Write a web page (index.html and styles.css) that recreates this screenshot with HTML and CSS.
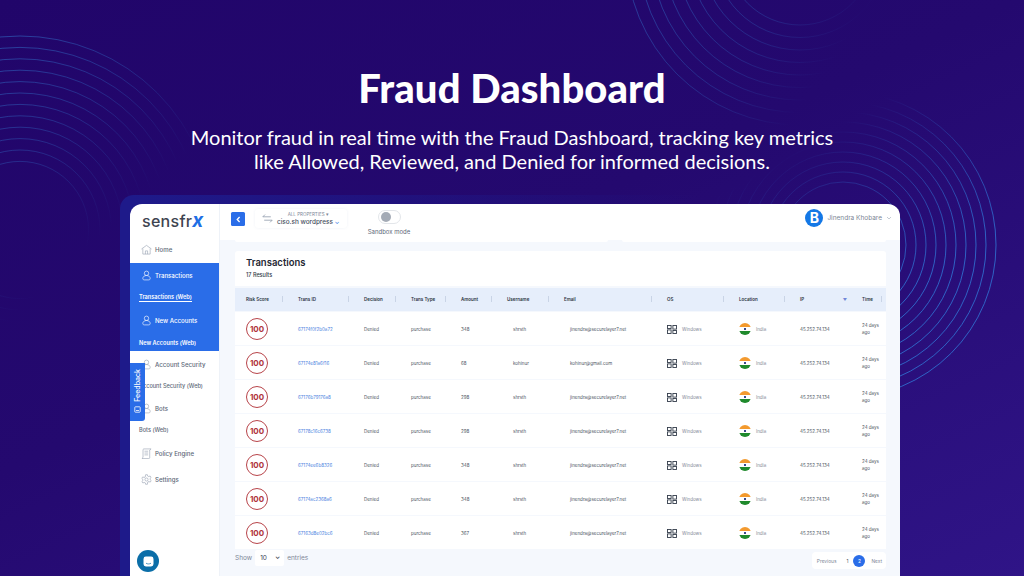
FILE: index.html
```html
<!DOCTYPE html>
<html>
<head>
    <title>Fraud Dashboard</title>
    <link rel="stylesheet" href="styles.css">
</head>
<body>
    <div class="stage">
        <svg class="rings" width="1024" height="576" viewBox="0 0 1024 576" fill="none" stroke-width="0.9">
            <defs>
                <linearGradient id="fadeLeft" gradientUnits="userSpaceOnUse" x1="10" y1="40" x2="150" y2="190">
                    <stop offset="0" stop-color="#2f63bd" stop-opacity="0.7"/>
                    <stop offset="0.5" stop-color="#2f63bd" stop-opacity="0.4"/>
                    <stop offset="1" stop-color="#2f63bd" stop-opacity="0"/>
                </linearGradient>
                <linearGradient id="fadeTop" gradientUnits="userSpaceOnUse" x1="640" y1="0" x2="800" y2="110">
                    <stop offset="0" stop-color="#2f63bd" stop-opacity="0.6"/>
                    <stop offset="0.6" stop-color="#2f63bd" stop-opacity="0.35"/>
                    <stop offset="1" stop-color="#2f63bd" stop-opacity="0"/>
                </linearGradient>
                <linearGradient id="fadeRight" gradientUnits="userSpaceOnUse" x1="860" y1="110" x2="950" y2="260">
                    <stop offset="0" stop-color="#2f6fd0" stop-opacity="0"/>
                    <stop offset="0.6" stop-color="#2f6fd0" stop-opacity="0.6"/>
                    <stop offset="1" stop-color="#2f6fd0" stop-opacity="0.95"/>
                </linearGradient>
            </defs>
            <g stroke="url(#fadeLeft)">
                <circle cx="20" cy="230" r="194"/><circle cx="20" cy="230" r="182.6"/><circle cx="20" cy="230" r="171.2"/>
                <circle cx="20" cy="230" r="159.8"/><circle cx="20" cy="230" r="148.4"/><circle cx="20" cy="230" r="137"/>
                <circle cx="20" cy="230" r="125.6"/><circle cx="20" cy="230" r="114.2"/><circle cx="20" cy="230" r="102.8"/>
                <circle cx="20" cy="230" r="91.4"/><circle cx="20" cy="230" r="80"/><circle cx="20" cy="230" r="68.6"/>
            </g>
            <g stroke="url(#fadeTop)">
                <circle cx="800" cy="-49" r="174"/><circle cx="800" cy="-49" r="161.5"/><circle cx="800" cy="-49" r="149"/>
                <circle cx="800" cy="-49" r="136.5"/><circle cx="800" cy="-49" r="124"/><circle cx="800" cy="-49" r="111.5"/>
                <circle cx="800" cy="-49" r="99"/><circle cx="800" cy="-49" r="86.5"/><circle cx="800" cy="-49" r="74"/>
            </g>
            <g stroke="url(#fadeRight)">
                <circle cx="843" cy="245" r="153"/><circle cx="843" cy="245" r="143"/><circle cx="843" cy="245" r="133"/>
                <circle cx="843" cy="245" r="123"/><circle cx="843" cy="245" r="113"/><circle cx="843" cy="245" r="103"/>
                <circle cx="843" cy="245" r="93"/><circle cx="843" cy="245" r="83"/><circle cx="843" cy="245" r="73"/>
                <circle cx="843" cy="245" r="63"/>
            </g>
        </svg>

        <div class="hero">
            <h1>Fraud Dashboard</h1>
            <p>Monitor fraud in real time with the Fraud Dashboard, tracking key metrics<br>like Allowed, Reviewed, and Denied for informed decisions.</p>
        </div>

        <div class="halo">
            <div class="panel">
                <div class="sidebar">
                    <div class="logo">sensfr<span>x</span></div>
                    <div class="nav-item home">
                        <svg class="nav-icon" viewBox="0 0 12 12" fill="none" stroke="#8b97a8" stroke-width="0.6"><path d="M0.5 5.5 6 1.5l5.5 4M2 5v6h8V5M4.8 11V7.5h2.4V11"/></svg>
                        Home
                    </div>
                    <div class="nav-active">
                        <div class="nav-item">
                            <svg class="nav-icon" viewBox="0 0 12 12" fill="none" stroke="#fff" stroke-width="0.7"><circle cx="6" cy="3.6" r="2.4"/><path d="M6 6c-2.6 0-4 1.6-4 3.2 0 1.2.8 1.6 1.6 1.6h4.8c.8 0 1.6-.4 1.6-1.6C10 7.6 8.6 6 6 6z"/></svg>
                            Transactions
                        </div>
                        <div class="nav-sub"><span class="current">Transactions (Web)</span></div>
                        <div class="nav-item">
                            <svg class="nav-icon" viewBox="0 0 12 12" fill="none" stroke="#fff" stroke-width="0.7"><circle cx="6" cy="3.6" r="2.4"/><path d="M6 6c-2.6 0-4 1.6-4 3.2 0 1.2.8 1.6 1.6 1.6h4.8c.8 0 1.6-.4 1.6-1.6C10 7.6 8.6 6 6 6z"/></svg>
                            New Accounts
                        </div>
                        <div class="nav-sub">New Accounts (Web)</div>
                    </div>
                    <div class="nav-item">
                        <svg class="nav-icon" viewBox="0 0 12 12" fill="none" stroke="#8b97a8" stroke-width="0.6"><circle cx="6" cy="3.6" r="2.4"/><path d="M6 6c-2.6 0-4 1.6-4 3.2 0 1.2.8 1.6 1.6 1.6h4.8c.8 0 1.6-.4 1.6-1.6C10 7.6 8.6 6 6 6z"/></svg>
                        Account Security
                    </div>
                    <div class="nav-sub dark">Account Security (Web)</div>
                    <div class="nav-item">
                        <svg class="nav-icon" viewBox="0 0 12 12" fill="none" stroke="#8b97a8" stroke-width="0.6"><circle cx="6" cy="3.6" r="2.4"/><path d="M6 6c-2.6 0-4 1.6-4 3.2 0 1.2.8 1.6 1.6 1.6h4.8c.8 0 1.6-.4 1.6-1.6C10 7.6 8.6 6 6 6z"/></svg>
                        Bots
                    </div>
                    <div class="nav-sub dark last">Bots (Web)</div>
                    <div class="nav-item tall">
                        <svg class="nav-icon" viewBox="0 0 12 12" fill="none" stroke="#8b97a8" stroke-width="0.6"><path d="M3 1h8L9.5 2.2V10.5a1 1 0 0 1-1 1H1l1.2-1.2V1.6zM3.8 3.5h4M3.8 5.5h4M3.8 7.5h4"/></svg>
                        Policy Engine
                    </div>
                    <div class="nav-item tall">
                        <svg class="nav-icon" viewBox="0 0 12 12" fill="none" stroke="#8b97a8" stroke-width="0.6"><circle cx="6" cy="6" r="1.7"/><path d="M5 .8h2l.3 1.5 1.3.6 1.3-.8 1.1 1.7-1.1 1 .1 1.4 1.1 1-1.1 1.7-1.3-.8-1.3.6L7 11.2H5l-.3-1.5-1.3-.6-1.3.8L1 8.2l1.1-1L2 5.8l-1.1-1L2 3.1l1.3.8 1.3-.6z"/></svg>
                        Settings
                    </div>
                </div>

                <div class="content">
                    <div class="topbar">
                        <div class="back-btn">
                            <svg width="7" height="7" viewBox="0 0 7 7" fill="none" stroke="#fff" stroke-width="1.3"><path d="M4.6 1 2.2 3.5 4.6 6"/></svg>
                        </div>
                        <div class="property">
                            <svg class="swap" width="11" height="9" viewBox="0 0 11 9" fill="none" stroke="#7f8c9f" stroke-width="0.7"><path d="M3 .6 .8 2.8h8M8 8.4l2.2-2.2h-8"/></svg>
                            <div class="property-text">
                                <div class="property-label">ALL PROPERTIES ▾</div>
                                <div class="property-name">ciso.sh wordpress <span class="caret">⌄</span></div>
                            </div>
                        </div>
                        <div class="sandbox">
                            <div class="toggle"><span></span></div>
                            <div class="sandbox-label">Sandbox mode</div>
                        </div>
                        <div class="user">
                            <div class="avatar">B</div>
                            <span>Jinendra Khobare</span>
                            <svg width="6" height="4" viewBox="0 0 6 4" fill="none" stroke="#9aa6b6" stroke-width="0.6"><path d="M1 1 3 3 5 1"/></svg>
                        </div>
                    </div>

                    <div class="main">
                        <div class="stubs"><div class="stub wide"></div><div class="stub"></div></div>
                        <div class="title-card">
                            <h2>Transactions</h2>
                            <div class="results">17 Results</div>
                        </div>

                        <div class="row head">
                            <div class="th">Risk Score<i></i></div>
                            <div class="th">Trans ID<i></i></div>
                            <div class="th">Decision<i></i></div>
                            <div class="th">Trans Type<i></i></div>
                            <div class="th">Amount<i></i></div>
                            <div class="th">Username<i></i></div>
                            <div class="th">Email<i></i></div>
                            <div class="th">OS<i></i></div>
                            <div class="th">Location<i></i></div>
                            <div class="th">IP<b class="sort">▼</b></div>
                            <div class="th">Time<i></i></div>
                        </div>

                        <div class="row">
                            <div class="td"><span class="score">100</span></div>
                            <div class="td link">67174f0f2b0a72</div>
                            <div class="td">Denied</div>
                            <div class="td">purchase</div>
                            <div class="td">348</div>
                            <div class="td indent">shrsth</div>
                            <div class="td indent">jinendra@securelayer7.net</div>
                            <div class="td os"><svg class="win" viewBox="0 0 10 9" fill="none" stroke="#333c4a" stroke-width="0.9"><rect x="0.5" y="0.5" width="3.6" height="3"/><rect x="5.9" y="0.5" width="3.6" height="3.6"/><rect x="0.5" y="4.9" width="3.6" height="3.6"/><rect x="5.9" y="5.5" width="3.6" height="3"/></svg>Windows</div>
                            <div class="td os"><span class="flag"></span>India</div>
                            <div class="td">45.252.74.134</div>
                            <div class="td">24 days ago</div>
                        </div>
                        <div class="row">
                            <div class="td"><span class="score">100</span></div>
                            <div class="td link">67174e81a6f16</div>
                            <div class="td">Denied</div>
                            <div class="td">purchase</div>
                            <div class="td">68</div>
                            <div class="td indent">kohinur</div>
                            <div class="td indent">kohinur@gmail.com</div>
                            <div class="td os"><svg class="win" viewBox="0 0 10 9" fill="none" stroke="#333c4a" stroke-width="0.9"><rect x="0.5" y="0.5" width="3.6" height="3"/><rect x="5.9" y="0.5" width="3.6" height="3.6"/><rect x="0.5" y="4.9" width="3.6" height="3.6"/><rect x="5.9" y="5.5" width="3.6" height="3"/></svg>Windows</div>
                            <div class="td os"><span class="flag"></span>India</div>
                            <div class="td">45.252.74.134</div>
                            <div class="td">24 days ago</div>
                        </div>
                        <div class="row">
                            <div class="td"><span class="score">100</span></div>
                            <div class="td link">67176b79176a8</div>
                            <div class="td">Denied</div>
                            <div class="td">purchase</div>
                            <div class="td">298</div>
                            <div class="td indent">shrsth</div>
                            <div class="td indent">jinendra@securelayer7.net</div>
                            <div class="td os"><svg class="win" viewBox="0 0 10 9" fill="none" stroke="#333c4a" stroke-width="0.9"><rect x="0.5" y="0.5" width="3.6" height="3"/><rect x="5.9" y="0.5" width="3.6" height="3.6"/><rect x="0.5" y="4.9" width="3.6" height="3.6"/><rect x="5.9" y="5.5" width="3.6" height="3"/></svg>Windows</div>
                            <div class="td os"><span class="flag"></span>India</div>
                            <div class="td">45.252.74.134</div>
                            <div class="td">24 days ago</div>
                        </div>
                        <div class="row">
                            <div class="td"><span class="score">100</span></div>
                            <div class="td link">67178c16c6738</div>
                            <div class="td">Denied</div>
                            <div class="td">purchase</div>
                            <div class="td">298</div>
                            <div class="td indent">shrsth</div>
                            <div class="td indent">jinendra@securelayer7.net</div>
                            <div class="td os"><svg class="win" viewBox="0 0 10 9" fill="none" stroke="#333c4a" stroke-width="0.9"><rect x="0.5" y="0.5" width="3.6" height="3"/><rect x="5.9" y="0.5" width="3.6" height="3.6"/><rect x="0.5" y="4.9" width="3.6" height="3.6"/><rect x="5.9" y="5.5" width="3.6" height="3"/></svg>Windows</div>
                            <div class="td os"><span class="flag"></span>India</div>
                            <div class="td">45.252.74.134</div>
                            <div class="td">24 days ago</div>
                        </div>
                        <div class="row">
                            <div class="td"><span class="score">100</span></div>
                            <div class="td link">67174ee6b8326</div>
                            <div class="td">Denied</div>
                            <div class="td">purchase</div>
                            <div class="td">348</div>
                            <div class="td indent">shrsth</div>
                            <div class="td indent">jinendra@securelayer7.net</div>
                            <div class="td os"><svg class="win" viewBox="0 0 10 9" fill="none" stroke="#333c4a" stroke-width="0.9"><rect x="0.5" y="0.5" width="3.6" height="3"/><rect x="5.9" y="0.5" width="3.6" height="3.6"/><rect x="0.5" y="4.9" width="3.6" height="3.6"/><rect x="5.9" y="5.5" width="3.6" height="3"/></svg>Windows</div>
                            <div class="td os"><span class="flag"></span>India</div>
                            <div class="td">45.252.74.134</div>
                            <div class="td">24 days ago</div>
                        </div>
                        <div class="row">
                            <div class="td"><span class="score">100</span></div>
                            <div class="td link">67174ac2368a6</div>
                            <div class="td">Denied</div>
                            <div class="td">purchase</div>
                            <div class="td">348</div>
                            <div class="td indent">shrsth</div>
                            <div class="td indent">jinendra@securelayer7.net</div>
                            <div class="td os"><svg class="win" viewBox="0 0 10 9" fill="none" stroke="#333c4a" stroke-width="0.9"><rect x="0.5" y="0.5" width="3.6" height="3"/><rect x="5.9" y="0.5" width="3.6" height="3.6"/><rect x="0.5" y="4.9" width="3.6" height="3.6"/><rect x="5.9" y="5.5" width="3.6" height="3"/></svg>Windows</div>
                            <div class="td os"><span class="flag"></span>India</div>
                            <div class="td">45.252.74.134</div>
                            <div class="td">24 days ago</div>
                        </div>
                        <div class="row">
                            <div class="td"><span class="score">100</span></div>
                            <div class="td link">67163d8e02bc6</div>
                            <div class="td">Denied</div>
                            <div class="td">purchase</div>
                            <div class="td">367</div>
                            <div class="td indent">shrsth</div>
                            <div class="td indent">jinendra@securelayer7.net</div>
                            <div class="td os"><svg class="win" viewBox="0 0 10 9" fill="none" stroke="#333c4a" stroke-width="0.9"><rect x="0.5" y="0.5" width="3.6" height="3"/><rect x="5.9" y="0.5" width="3.6" height="3.6"/><rect x="0.5" y="4.9" width="3.6" height="3.6"/><rect x="5.9" y="5.5" width="3.6" height="3"/></svg>Windows</div>
                            <div class="td os"><span class="flag"></span>India</div>
                            <div class="td">45.252.74.134</div>
                            <div class="td">24 days ago</div>
                        </div>

                        <div class="table-foot">
                            <div class="show">
                                Show
                                <span class="select">10 <b>⌄</b></span>
                                entries
                            </div>
                            <div class="pager">
                                <span>Previous</span>
                                <span class="num">1</span>
                                <span class="page-on">2</span>
                                <span>Next</span>
                            </div>
                        </div>
                    </div>
                </div>

                <div class="feedback">
                    <span>Feedback</span>
                    <svg width="7" height="7" viewBox="0 0 7 7" fill="none" stroke="#fff" stroke-width="0.8"><rect x="0.8" y="0.8" width="5.4" height="5.4" rx="0.6"/><path d="M2 4.5h3"/></svg>
                </div>
                <div class="chat">
                    <svg width="11" height="11" viewBox="0 0 11 11"><rect x="0.5" y="0.5" width="10" height="10" rx="2.4" fill="#fff"/><path d="M3 7.2c1.5 1 3.5 1 5 0" fill="none" stroke="#0b6ea8" stroke-width="0.7"/></svg>
                </div>
            </div>
        </div>
    </div>
</body>
</html>
```

FILE: styles.css
```css
* {
    box-sizing: border-box;
}
body {
    margin: 0;
    font-family: Inter, "Liberation Sans", sans-serif;
}
.stage {
    position: relative;
    width: 1024px;
    height: 576px;
    overflow: hidden;
    background: linear-gradient(155deg, #21056a 0%, #24096f 45%, #2f1487 100%);
}
.rings {
    position: absolute;
    left: 0;
    top: 0;
}
.hero {
    position: relative;
    height: 195px;
    padding-top: 63px;
    text-align: center;
    color: #fff;
    font-family: Lato, "Liberation Sans", sans-serif;
}
.hero h1 {
    margin: 0 0 12px;
    font-size: 40px;
    line-height: 50px;
    font-weight: 900;
    letter-spacing: 0.1px;
}
.hero p {
    margin: 0;
    font-size: 20px;
    line-height: 24px;
}
.halo {
    position: relative;
    width: 780px;
    height: 381px;
    margin-left: 120px;
    padding: 9px 0 0 10px;
    border-radius: 14px 0 0 0;
    background: linear-gradient(90deg, #1e1a8a 0, #1e1a8a 10px, rgba(30, 26, 138, 0.4) 45%, rgba(30, 26, 138, 0) 75%);
}
.panel {
    position: relative;
    display: flex;
    width: 770px;
    height: 372px;
    overflow: hidden;
    border-radius: 12px 12px 0 0;
    background: #fff;
}

/* sidebar */
.sidebar {
    width: 90px;
    flex-shrink: 0;
    border-right: 1px solid #eef2f8;
    color: #5d6878;
    font-size: 6.1px;
    font-weight: 500;
}
.logo {
    height: 36px;
    padding: 5px 0 0 12px;
    font-size: 16px;
    line-height: 24px;
    font-weight: 500;
    letter-spacing: 0.3px;
    color: #3e4450;
}
.logo span {
    font-size: 19px;
    font-style: italic;
    font-weight: 700;
    color: #1f6fe5;
}
.nav-item {
    display: flex;
    align-items: center;
    gap: 3px;
    height: 22px;
    padding-left: 11px;
}
.nav-icon {
    width: 11px;
    height: 11px;
    flex-shrink: 0;
}
.home {
    height: 23px;
    padding-bottom: 4px;
}
.nav-active {
    height: 88px;
    padding-top: 1px;
    margin-bottom: 2px;
    background: #2a6de8;
    color: #fff;
}
.nav-active .nav-sub {
    height: 23px;
}
.nav-sub {
    display: flex;
    align-items: center;
    height: 22px;
    padding-left: 9px;
    font-size: 5.6px;
    font-weight: 600;
}
.nav-sub.dark {
    font-weight: 500;
    color: #5d6878;
}
.nav-sub.last {
    margin-bottom: -1px;
}
.current {
    padding-bottom: 1px;
    border-bottom: 1px solid #fff;
}
.nav-item.tall {
    height: 26px;
}

/* top bar */
.content {
    flex: 1;
    min-width: 0;
    display: flex;
    flex-direction: column;
}
.topbar {
    display: flex;
    align-items: flex-start;
    height: 36px;
    padding: 8px 8px 0 11px;
    flex-shrink: 0;
}
.back-btn {
    display: flex;
    align-items: center;
    justify-content: center;
    width: 14px;
    height: 14px;
    border-radius: 1.5px;
    background: #2a6de8;
}
.property {
    display: flex;
    align-items: center;
    gap: 4px;
    width: 92px;
    height: 19px;
    margin: -3px 0 0 10px;
    padding-left: 7px;
    border-radius: 3px;
    box-shadow: 0 0 3px rgba(60, 90, 150, 0.08);
}
.swap {
    flex-shrink: 0;
}
.property-text {
    text-align: center;
    white-space: nowrap;
}
.property-label {
    font-size: 4.5px;
    line-height: 6px;
    color: #7d8797;
}
.property-name {
    font-size: 6.4px;
    line-height: 8px;
    font-weight: 500;
    color: #46505f;
}
.caret {
    color: #2a6de8;
}
.sandbox {
    width: 44px;
    margin: -2px 0 0 20px;
    text-align: center;
}
.toggle {
    width: 23px;
    height: 14px;
    margin: 0 auto 4px;
    padding: 2px;
    border: 1px solid #e3e6ea;
    border-radius: 7px;
    background: #fff;
}
.toggle span {
    display: block;
    width: 10px;
    height: 10px;
    margin-top: -1px;
    border-radius: 50%;
    background: #a4abb6;
}
.sandbox-label {
    font-size: 6px;
    line-height: 8px;
    color: #5d6878;
    white-space: nowrap;
}
.user {
    display: flex;
    align-items: center;
    gap: 4px;
    margin-left: auto;
    margin-top: -3px;
    font-size: 6.5px;
    color: #7b8695;
    white-space: nowrap;
}
.avatar {
    width: 18px;
    height: 18px;
    border-radius: 50%;
    background: #1478e6;
    color: #fff;
    font-size: 14px;
    font-weight: 700;
    line-height: 18px;
    text-align: center;
}

/* main area */
.main {
    flex: 1;
    padding: 0 14px 0 15px;
    background: #f5f8fd;
}
.stubs {
    display: flex;
    gap: 14px;
    height: 2px;
    margin-bottom: 9px;
}
.stub {
    flex: 1;
    background: #fff;
    border-radius: 0 0 3px 3px;
}
.stub.wide {
    flex: 0 0 373px;
}
.title-card {
    height: 35px;
    margin-bottom: 2px;
    padding: 6px 11px;
    border-radius: 3px 3px 0 0;
    background: #fff;
}
.title-card h2 {
    margin: 0;
    font-size: 9.5px;
    line-height: 12px;
    font-weight: 600;
    color: #1f2733;
}
.results {
    margin-top: 3px;
    font-size: 5.5px;
    line-height: 7px;
    font-weight: 500;
    color: #2e3744;
}
.row {
    display: grid;
    grid-template-columns: 52px 66px 47px 50px 46px 57px 103px 72px 61px 62px 35px;
    align-items: center;
    height: 33px;
    margin-bottom: 1px;
    padding-top: 1px;
    background: #fff;
    font-size: 4.5px;
    color: #4a5361;
}
.head {
    height: 23px;
    padding: 0 0 1px;
    background: #e6eefb;
    color: #2a3340;
    font-weight: 600;
}
.th {
    display: flex;
    align-items: center;
    justify-content: space-between;
    padding: 0 4px 0 11px;
    white-space: nowrap;
}
.th i {
    width: 1px;
    height: 6px;
    background: #c9d4e6;
}
.sort {
    font-size: 4px;
    color: #6f86d8;
}
.td {
    padding-left: 11px;
    line-height: 7px;
}
.td.indent {
    padding-left: 17px;
}
.link {
    color: #4a7fe0;
}
.score {
    display: block;
    width: 22px;
    height: 22px;
    border: 1px solid #b8444a;
    border-radius: 50%;
    color: #b0343a;
    font-size: 8px;
    font-weight: 700;
    line-height: 20px;
    text-align: center;
}
.os {
    display: flex;
    align-items: center;
    gap: 5px;
    color: #7f8896;
}
.win {
    width: 10px;
    height: 9px;
    flex-shrink: 0;
}
.flag {
    width: 12px;
    height: 12px;
    flex-shrink: 0;
    border-radius: 50%;
    background: radial-gradient(circle, #3b4a8c 0 1px, transparent 1.2px), linear-gradient(#f39a2e 0 33%, #fff 33% 66%, #1f8a2c 66%);
}
.table-foot {
    display: flex;
    justify-content: space-between;
    align-items: flex-start;
    color: #7d8797;
    font-size: 6.5px;
}
.show {
    display: flex;
    align-items: center;
    gap: 3px;
}
.select {
    display: flex;
    justify-content: space-between;
    align-items: center;
    width: 29px;
    height: 16px;
    padding: 0 4px 0 5px;
    border-radius: 2px;
    background: #fff;
    color: #3a4350;
}
.select b {
    margin-top: -3px;
}
.pager {
    display: flex;
    align-items: center;
    gap: 6px;
    height: 17px;
    margin-top: 2px;
    padding: 0 4px 0 5px;
    border-radius: 4px;
    background: #fff;
    font-size: 4.8px;
    color: #7d8797;
}
.num {
    margin: 0 0 0 4px;
    color: #4a5361;
}
.page-on {
    width: 12px;
    height: 12px;
    margin-left: -1px;
    border-radius: 50%;
    background: #2a6de8;
    color: #fff;
    line-height: 12px;
    text-align: center;
}

/* things sitting on top of the panel */
.feedback {
    position: absolute;
    left: 0;
    top: 159px;
    display: flex;
    flex-direction: column;
    align-items: center;
    gap: 4px;
    width: 15px;
    height: 58px;
    padding-top: 6px;
    border-radius: 0 0 3px 0;
    background: #2a6de8;
    color: #fff;
    font-size: 7px;
    font-weight: 500;
}
.feedback span {
    writing-mode: vertical-rl;
    transform: rotate(180deg);
}
.chat {
    position: absolute;
    left: 7px;
    top: 346px;
    display: flex;
    align-items: center;
    justify-content: center;
    width: 22px;
    height: 22px;
    border-radius: 50%;
    background: #0b6ea8;
}
```
